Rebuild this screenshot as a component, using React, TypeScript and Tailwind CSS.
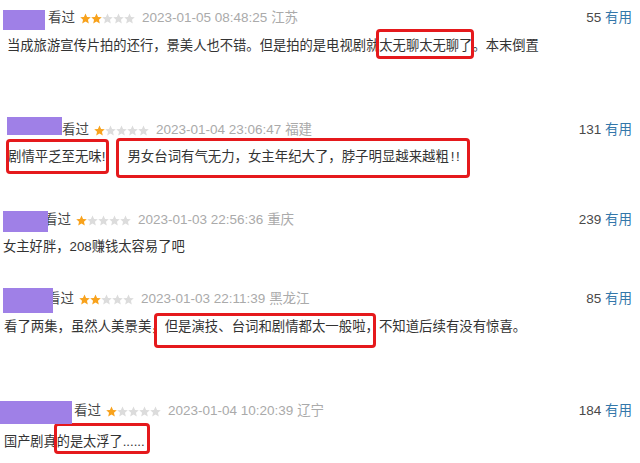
import React from 'react'

const Star = ({ on }: { on: boolean }) => (
  <svg viewBox="1 1 22 21" className="h-[11px] w-[11px]">
    <path
      d="M12 1.5l3.1 7 7.4.6-5.6 4.9 1.7 7.4L12 17.5l-6.6 3.9 1.7-7.4L1.5 9.1l7.4-.6z"
      fill={on ? '#f8a21c' : '#dcdcdc'}
    />
  </svg>
)

const Stars = ({ n }: { n: number }) => (
  <span className="ml-[5px] flex">
    {[0, 1, 2, 3, 4].map((i) => (
      <Star key={i} on={i < n} />
    ))}
  </span>
)

// red annotation frame drawn over a piece of text
const Marked = ({ children, frame }: { children: React.ReactNode; frame: string }) => (
  <span className="relative inline-block">
    {children}
    <span className={`pointer-events-none absolute rounded-[4px] border-[3px] border-[#e5191c] ${frame}`} />
  </span>
)

type MetaProps = {
  className: string
  block: string
  watched: string
  stars: number
  time: string
  place: string
  votes: number
}

const Meta = ({ className, block, watched, stars, time, place, votes }: MetaProps) => (
  <div className={`flex h-5 items-center justify-between pr-2 text-[13.5px] ${className}`}>
    <div className="flex items-center">
      <div className={`relative z-10 shrink-0 bg-[#9f80e7] ${block}`} />
      <span className={`text-[#494949] ${watched}`}>看过</span>
      <Stars n={stars} />
      <span className="ml-[7px] text-[#aaaaaa]">
        {time} {place}
      </span>
    </div>
    <div>
      <span className="text-[#494949]">{votes}</span>{' '}
      <span className="text-[#3377aa]">有用</span>
    </div>
  </div>
)

export default function App() {
  return (
    <div
      className="h-[463px] w-[640px] overflow-hidden bg-white leading-5 text-[#333333]"
      style={{ fontFamily: '"Liberation Sans", "Noto Sans CJK SC", sans-serif' }}
    >
      <Meta
        className="mt-2"
        block="ml-[3px] h-5 w-[42px] translate-y-[2px]"
        watched="ml-[3px]"
        stars={2}
        time="2023-01-05 08:48:25"
        place="江苏"
        votes={55}
      />
      <p className="mt-2 pl-[7px] text-[13.3px]">
        当成旅游宣传片拍的还行，景美人也不错。但是拍的是电视剧就
        <Marked frame="-left-[3px] -right-[2px] -top-[7px] -bottom-[3px]">太无聊太无聊了</Marked>
        。本末倒置
      </p>

      <Meta
        className="mt-16"
        block="ml-[7px] h-[18px] w-[55px] -translate-y-[4px]"
        watched="ml-0"
        stars={1}
        time="2023-01-04 23:06:47"
        place="福建"
        votes={131}
      />
      <p className="mt-[7px] pl-[8px] text-[13.4px]">
        <Marked frame="-left-[2px] -right-[4px] -top-[8px] -bottom-[7px]">剧情平乏至无味!</Marked>
        <span className="ml-[22px]" />
        <Marked frame="-left-[11px] -right-[9px] -top-[9px] -bottom-[11px]">
          男女台词有气无力，女主年纪大了，脖子明显越来越粗<span className="ml-[2px] tracking-[1.5px]">!!</span>
        </Marked>
      </p>

      <Meta
        className="mt-[43px]"
        block="ml-[3px] h-[21px] w-[45px] translate-y-[1px]"
        watched="-ml-[4px]"
        stars={1}
        time="2023-01-03 22:56:36"
        place="重庆"
        votes={239}
      />
      <p className="mt-[7px] pl-[3px] text-[13.3px]">女主好胖，208赚钱太容易了吧</p>

      <Meta
        className="mt-8"
        block="ml-[3px] h-[25px] w-[50px] translate-y-[1px]"
        watched="-ml-[6px]"
        stars={2}
        time="2023-01-03 22:11:39"
        place="黑龙江"
        votes={85}
      />
      <p className="mt-2 pl-[4px] text-[13.4px]">
        看了两集，虽然人美景美，
        <Marked frame="-left-[11px] right-[3px] -top-[4px] -bottom-[11px]">但是演技、台词和剧情都太一般啦，</Marked>
        不知道后续有没有惊喜。
      </p>

      <Meta
        className="mt-16"
        block="ml-0 h-[23px] w-[72px] translate-y-[1px]"
        watched="ml-[2px]"
        stars={1}
        time="2023-01-04 10:20:39"
        place="辽宁"
        votes={184}
      />
      <p className="mt-[11px] pl-[4px] text-[13.2px]">
        国产剧真
        <Marked frame="-left-[3px] -right-[5px] -top-[9px] -bottom-[2px]">的是太浮了......</Marked>
      </p>
    </div>
  )
}
